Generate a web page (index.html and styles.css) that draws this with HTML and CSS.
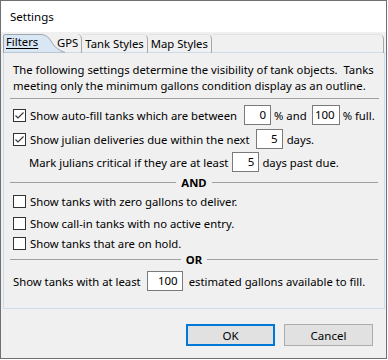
FILE: index.html
```html
<!DOCTYPE html>
<html lang="en">
<head>
  <meta charset="UTF-8">
  <title>Settings</title>
  <link rel="stylesheet" href="styles.css">
</head>
<body>
  <div class="window">
    <div class="titlebar">Settings</div>

    <div class="dialog">
      <!-- Tab strip -->
      <div class="tabs">
        <div class="tab selected">
          <svg class="tab-shape" width="62" height="20" viewBox="0 0 62 20">
            <path d="M0.5 20 L0.5 3 Q0.5 1.5 2 1.5 L38 1.5 Q44 1.5 48 8 Q53 17 62 19.5 L62 20 Z" fill="#d9e6f4" stroke="#9aa6b2" stroke-width="1"/>
          </svg>
          <span class="tab-label">Filters</span>
        </div>
        <div class="tab gps">GPS</div>
        <div class="tab">Tank Styles</div>
        <div class="tab">Map Styles</div>
        <div class="tab filler"></div>
      </div>

      <!-- Filters page -->
      <div class="panel">
        <p class="intro">The following settings determine the visibility of tank objects.&nbsp; Tanks<br>meeting only the minimum gallons condition display as an outline.</p>
        <div class="sep"></div>

        <div class="row r1">
          <span class="cb checked"><svg width="13" height="13" viewBox="0 0 13 13"><path d="M2.5 6.5 L5 9 L10.5 3.5" fill="none" stroke="#333" stroke-width="1.1"/></svg></span>
          <span>Show auto-fill tanks which are between</span>
          <span class="num w27 ml7">0</span>
          <span class="ml3">% and</span>
          <span class="num w28 ml5">100</span>
          <span class="ml3">% full.</span>
        </div>

        <div class="row r2">
          <span class="cb checked"><svg width="13" height="13" viewBox="0 0 13 13"><path d="M2.5 6.5 L5 9 L10.5 3.5" fill="none" stroke="#333" stroke-width="1.1"/></svg></span>
          <span>Show julian deliveries due within the next</span>
          <span class="num w27 ml6">5</span>
          <span class="ml4">days.</span>
        </div>

        <div class="row r3 indent">
          <span>Mark julians critical if they are at least</span>
          <span class="num w27 ml4">5</span>
          <span class="ml3">days past due.</span>
        </div>

        <div class="divider and"><span>AND</span></div>

        <div class="row r4">
          <span class="cb"></span>
          <span>Show tanks with zero gallons to deliver.</span>
        </div>
        <div class="row r5">
          <span class="cb"></span>
          <span>Show call-in tanks with no active entry.</span>
        </div>
        <div class="row r6">
          <span class="cb"></span>
          <span>Show tanks that are on hold.</span>
        </div>

        <div class="divider or"><span>OR</span></div>

        <div class="row r7">
          <span>Show tanks with at least</span>
          <span class="num w36 ml6">100</span>
          <span class="ml6">estimated gallons available to fill.</span>
        </div>
      </div>

      <div class="buttons">
        <button class="btn default">OK</button>
        <button class="btn">Cancel</button>
      </div>
    </div>
  </div>
</body>
</html>
```

FILE: styles.css
```css
body {
  margin: 0;
  background: #ffffff;
  font-family: "Noto Sans", "Open Sans", sans-serif;
  font-size: 11.3px;
  color: #000;
}
.window {
  width: 385px;
  height: 357px;
  border: 1px solid #707070;
  background: #f0f0f0;
  display: flex;
  flex-direction: column;
}
.titlebar {
  height: 31px;
  background: #ffffff;
  padding-left: 9px;
  line-height: 31px;
  font-size: 11.5px;
}
.dialog {
  flex: 1;
  display: flex;
  flex-direction: column;
  padding: 1px 1px 0 2px;
}

/* tabs */
.tabs {
  display: flex;
  height: 19px;
}
.tab {
  position: relative;
  line-height: 18px;
  margin-top: 1px;
  padding: 0 3px 0 3px;
  border-right: 1px solid #a8a8a8;
  border-top: 1px solid #e2e2e2;
  border-top-right-radius: 5px;
  box-sizing: border-box;
  height: 19px;
}
.tab.selected {
  width: 53px;
  padding: 0 0 0 3px;
  border: none;
  margin-top: 0;
  z-index: 1;
}
.tab-shape {
  position: absolute;
  left: 0;
  top: 0;
}
.tab-label {
  position: relative;
  text-decoration: underline;
  text-underline-offset: 2px;
}
.tab.gps {
  padding-left: 1px;
  border-top: none;
}
.tab.filler {
  flex: 1;
  margin-right: 1px;
}

.panel {
  height: 255px;
  border: 1px solid #cadcee;
  background: #f0f0f0;
  display: flex;
  flex-direction: column;
}
.intro {
  margin: 9px 0 0 9px;
  line-height: 16px;
  white-space: nowrap;
}
.sep {
  height: 1px;
  background: #a0a0a0;
  margin: 4px 5px 0 6px;
}
.row {
  display: flex;
  align-items: center;
  height: 22px;
  padding-left: 9px;
  white-space: nowrap;
}
.row.indent { padding-left: 25px; }
.r1 { margin-top: 5px; }
.r2 { margin-top: 2px; }
.r3 { margin-top: 1px; }
.r4 { height: 20px; }
.r5 { margin-top: 2px; height: 20px; }
.r6 { height: 20px; }
.r7 { margin-top: 5px; }

.cb {
  width: 13px;
  height: 13px;
  box-sizing: border-box;
  border: 1px solid #333;
  background: #fff;
  margin-right: 4px;
  display: flex;
}
.cb svg { margin: -1px; }

.num {
  height: 20px;
  box-sizing: border-box;
  border: 1px solid #7a7a7a;
  background: #fff;
  text-align: right;
  padding-right: 4px;
  line-height: 18px;
  font-size: 11.5px;
}
.w27 { width: 27px; }
.w28 { width: 28px; }
.w36 { width: 36px; }
.ml3 { margin-left: 3px; }
.ml4 { margin-left: 4px; }
.ml5 { margin-left: 5px; }
.ml6 { margin-left: 6px; }
.ml7 { margin-left: 7px; }

.divider {
  display: flex;
  align-items: center;
  margin: 0 6px 0 6px;
  font-weight: bold;
}
.divider::before,
.divider::after {
  content: "";
  flex: 1;
  height: 1px;
  background: #a0a0a0;
}
.divider span { padding: 0 5px; }
.divider.and { height: 18px; }
.divider.or { height: 12px; }

.buttons {
  display: flex;
  justify-content: flex-end;
  gap: 9px;
  padding: 15px 12px 0 0;
}
.btn {
  width: 89px;
  height: 22px;
  font-family: inherit;
  font-size: 11.5px;
  background: #e1e1e1;
  border: 1px solid #adadad;
  color: #000;
  padding: 0;
}
.btn.default {
  border: 2px solid #0078d7;
}
```
